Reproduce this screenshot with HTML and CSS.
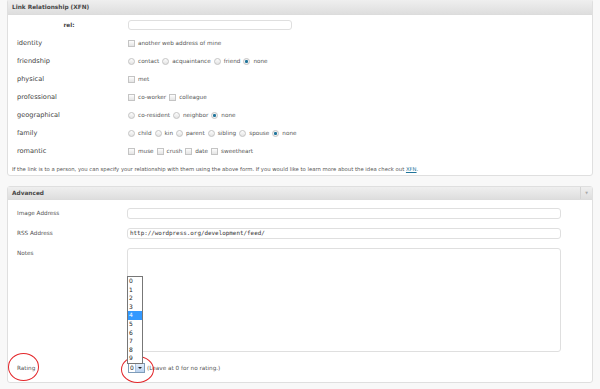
FILE: index.html
```html
<!DOCTYPE html>
<html lang="en">
<head>
    <meta charset="UTF-8">
    <title>Edit Link</title>
    <link rel="stylesheet" href="styles.css">
</head>
<body>
    <!-- Link Relationship (XFN) -->
    <div class="postbox xfn-box">
        <div class="box-head"><span class="box-title">Link Relationship (XFN)</span></div>
        <div class="box-body">
            <div class="xrow rel-row">
                <span class="xlabel rel-label">rel:</span>
                <span class="xfield"><span class="txt rel-input"></span></span>
            </div>
            <div class="xrow">
                <span class="xlabel">identity</span>
                <span class="xfield"><span class="cb"></span><span class="opt">another web address of mine</span></span>
            </div>
            <div class="xrow">
                <span class="xlabel">friendship</span>
                <span class="xfield">
                    <span class="rd"></span><span class="opt">contact</span>
                    <span class="rd"></span><span class="opt">acquaintance</span>
                    <span class="rd"></span><span class="opt">friend</span>
                    <span class="rd on"></span><span class="opt">none</span>
                </span>
            </div>
            <div class="xrow">
                <span class="xlabel">physical</span>
                <span class="xfield"><span class="cb"></span><span class="opt">met</span></span>
            </div>
            <div class="xrow">
                <span class="xlabel">professional</span>
                <span class="xfield">
                    <span class="cb"></span><span class="opt">co-worker</span>
                    <span class="cb"></span><span class="opt">colleague</span>
                </span>
            </div>
            <div class="xrow">
                <span class="xlabel">geographical</span>
                <span class="xfield">
                    <span class="rd"></span><span class="opt">co-resident</span>
                    <span class="rd"></span><span class="opt">neighbor</span>
                    <span class="rd on"></span><span class="opt">none</span>
                </span>
            </div>
            <div class="xrow">
                <span class="xlabel">family</span>
                <span class="xfield">
                    <span class="rd"></span><span class="opt">child</span>
                    <span class="rd"></span><span class="opt">kin</span>
                    <span class="rd"></span><span class="opt">parent</span>
                    <span class="rd"></span><span class="opt">sibling</span>
                    <span class="rd"></span><span class="opt">spouse</span>
                    <span class="rd on"></span><span class="opt">none</span>
                </span>
            </div>
            <div class="xrow">
                <span class="xlabel">romantic</span>
                <span class="xfield">
                    <span class="cb"></span><span class="opt">muse</span>
                    <span class="cb"></span><span class="opt">crush</span>
                    <span class="cb"></span><span class="opt">date</span>
                    <span class="cb"></span><span class="opt">sweetheart</span>
                </span>
            </div>
            <p class="xfn-note">If the link is to a person, you can specify your relationship with them using the above form. If you would like to learn more about the idea check out <a href="#">XFN</a>.</p>
        </div>
    </div>

    <!-- Advanced -->
    <div class="postbox adv-box">
        <div class="box-head">
            <span class="box-title">Advanced</span>
            <span class="box-toggle">&#9660;</span>
        </div>
        <div class="box-body adv-body">
            <div class="arow">
                <span class="alabel">Image Address</span>
                <span class="afield"><span class="txt"></span></span>
            </div>
            <div class="arow">
                <span class="alabel">RSS Address</span>
                <span class="afield"><span class="txt mono">http://wordpress.org/development/feed/</span></span>
            </div>
            <div class="arow">
                <span class="alabel">Notes</span>
                <span class="afield"><span class="txt notes"></span></span>
            </div>
            <div class="arow rating-row">
                <span class="alabel">Rating</span>
                <span class="afield">
                    <span class="sel">
                        <span class="sel-val">0</span>
                        <span class="sel-btn"><span class="sel-arrow"></span></span>
                        <!-- open dropdown list -->
                        <span class="sel-list">
                            <span class="sel-item">0</span>
                            <span class="sel-item">1</span>
                            <span class="sel-item">2</span>
                            <span class="sel-item">3</span>
                            <span class="sel-item active">4</span>
                            <span class="sel-item">5</span>
                            <span class="sel-item">6</span>
                            <span class="sel-item">7</span>
                            <span class="sel-item">8</span>
                            <span class="sel-item">9</span>
                        </span>
                    </span>
                    <span class="hint">(Leave at 0 for no rating.)</span>
                </span>
                <span class="mark mark-label"></span>
                <span class="mark mark-select"></span>
            </div>
        </div>
    </div>
</body>
</html>
```

FILE: styles.css
```css
html, body {
    margin: 0;
    padding: 0;
    background: #f8f8f8;
    font-family: "DejaVu Sans", Verdana, sans-serif;
    color: #333;
}
body {
    padding: 0 7px;
}
/* Boxes */
.postbox {
    background: #fff;
    border: 1px solid #dfdfdf;
    border-radius: 3px;
}
.xfn-box {
    margin-top: -1px;
}
.adv-box {
    margin-top: 10px;
}
.box-head {
    display: flex;
    align-items: center;
    height: 14px;
    background: linear-gradient(#efefef, #dedede);
    border-bottom: 1px solid #dcdcdc;
}
.adv-box .box-head {
    height: 12px;
}
.box-title {
    flex: 1;
    padding-left: 4px;
    font-size: 5.8px;
    font-weight: bold;
    color: #464646;
}
.box-toggle {
    width: 11px;
    height: 100%;
    border-left: 1px solid #d4d4d4;
    color: #aaa;
    font-size: 3.5px;
    line-height: 12px;
    text-align: center;
}
.box-body {
    padding-left: 9px;
}
/* XFN rows */
.xrow {
    display: flex;
    align-items: center;
    height: 18px;
}
.rel-row {
    height: 19px;
}
.xlabel {
    width: 110px;
    flex: none;
    font-size: 6.6px;
    color: #444;
}
.rel-label {
    text-align: center;
    font-weight: bold;
    font-size: 5.8px;
    padding-right: 6px;
    box-sizing: border-box;
}
.xfield {
    display: flex;
    align-items: center;
    padding-left: 1px;
}
.opt {
    font-size: 5.7px;
    color: #555;
    margin-right: 3px;
}
.cb, .rd {
    display: inline-block;
    width: 5px;
    height: 5px;
    border: 1px solid #c4c4c4;
    background: linear-gradient(#fdfdfd, #e4e4e4);
    margin-right: 3px;
    flex: none;
}
.rd {
    border-radius: 50%;
}
.rd.on {
    background: radial-gradient(circle, #21759b 0 38%, #f2f2f2 45%);
}
.xfn-note {
    margin: 0;
    padding: 5px 0 2px 4px;
    margin-left: -9px;
    font-size: 5.3px;
    line-height: 8px;
    color: #555;
}
.xfn-note a {
    color: #21759b;
}
/* Text inputs */
.txt {
    display: block;
    box-sizing: border-box;
    height: 11px;
    border: 1px solid #dfdfdf;
    border-radius: 3px;
    background: #fff;
    padding-left: 2px;
    font-size: 5.9px;
    line-height: 9px;
    color: #333;
}
.rel-input {
    width: 164px;
    height: 10px;
}
.mono {
    font-family: "DejaVu Sans Mono", "Liberation Mono", monospace;
}
.notes {
    height: 104px;
}
/* Advanced rows */
.adv-body {
    padding-top: 3px;
    padding-right: 31px;
}
.arow {
    display: flex;
    align-items: flex-start;
    padding: 5px 0 4px;
}
.alabel {
    width: 110px;
    flex: none;
    font-size: 5.7px;
    line-height: 11px;
    color: #555;
}
.afield {
    flex: 1;
    display: flex;
    align-items: center;
}
.afield .txt {
    width: 100%;
}
.rating-row {
    position: relative;
    padding: 7px 0 9px;
}
.rating-row .alabel {
    line-height: 10px;
}
/* Select */
.sel {
    position: relative;
    display: flex;
    width: 17px;
    height: 10px;
    box-sizing: border-box;
    border: 1px solid #7f9db9;
    background: #fff;
    margin-left: 1px;
}
.sel-val {
    flex: 1;
    font-size: 6px;
    line-height: 8px;
    padding-left: 1px;
    color: #222;
}
.sel-btn {
    width: 8px;
    display: flex;
    align-items: center;
    justify-content: center;
    background: linear-gradient(#e4eefa, #b9d1ee);
    border-left: 1px solid #a9c2e0;
}
.sel-arrow {
    width: 0;
    height: 0;
    border-left: 2px solid transparent;
    border-right: 2px solid transparent;
    border-top: 2px solid #222;
}
.sel-list {
    position: absolute;
    left: -2px;
    bottom: 100%;
    width: 16px;
    box-sizing: border-box;
    border: 1px solid #777;
    background: #fff;
    display: flex;
    flex-direction: column;
    z-index: 5;
}
.sel-item {
    height: 8.6px;
    line-height: 8.6px;
    font-size: 6px;
    padding-left: 1px;
    color: #222;
}
.sel-item.active {
    background: #3399ff;
    color: #fff;
}
.hint {
    margin-left: 2px;
    font-size: 5.7px;
    color: #555;
}
/* Red highlight circles */
.mark {
    position: absolute;
    border: 1px solid #e3262a;
    border-radius: 50%;
    box-sizing: border-box;
}
.mark-label {
    left: -9px;
    top: -3px;
    width: 31px;
    height: 28px;
}
.mark-select {
    left: 104px;
    top: 0;
    width: 33px;
    height: 27px;
}
```
